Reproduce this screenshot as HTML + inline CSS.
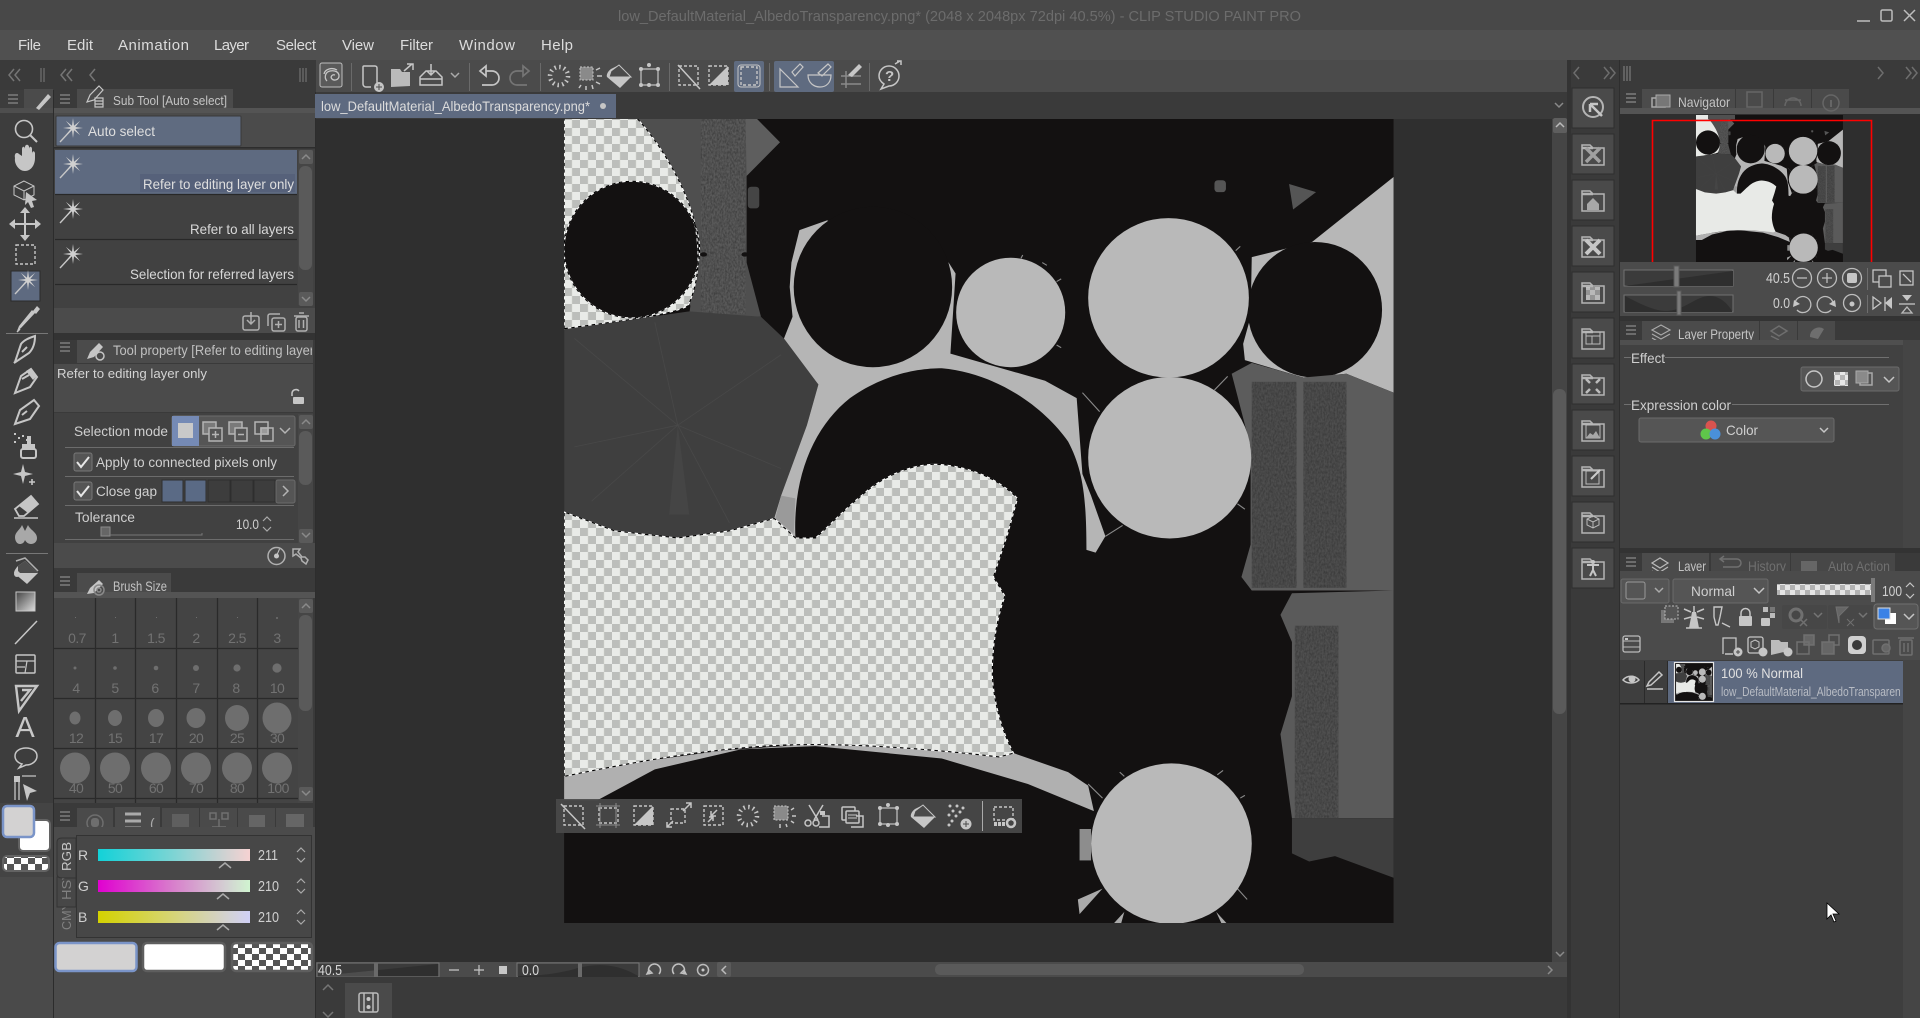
<!DOCTYPE html>
<html lang="en"><head><meta charset="utf-8"><title>CLIP STUDIO PAINT PRO</title>
<style>
html,body{margin:0;padding:0;background:#3a3a3a;overflow:hidden}
svg{display:block}
text{font-family:"Liberation Sans",sans-serif;font-size:13px;fill:#cfcfcf}
.s:not([fill]),.m:not([fill]),.dk:not([fill]){fill:none}
.s:not([stroke]){stroke:#c6c6c6}
.m:not([stroke]){stroke:#8a8a8a}
.dk:not([stroke]){stroke:#757575}
.s:not([stroke-width]),.m:not([stroke-width]),.dk:not([stroke-width]){stroke-width:1.5}
.f:not([fill]){fill:#c6c6c6}
.g{fill:#8e8e8e}
.ds{fill:none;stroke:#c6c6c6;stroke-width:1.4;stroke-dasharray:3 2}
.gl{fill:#727272;font-size:14px;text-anchor:middle;letter-spacing:-.6px}
</style></head><body>
<svg xmlns="http://www.w3.org/2000/svg" width="1920" height="1018" viewBox="0 0 1920 1018">
<defs>
<pattern id="chk" patternUnits="userSpaceOnUse" x="564" y="120" width="16" height="16" patternTransform="scale(1.7422,1.845) translate(-540,-100)">
<rect width="16" height="16" fill="#e9ebe8"/><rect x="8" width="8" height="8" fill="#bcbebb"/><rect y="8" width="8" height="8" fill="#bcbebb"/>
</pattern>
<pattern id="chk2" patternUnits="userSpaceOnUse" width="14" height="12"><rect width="14" height="12" fill="#fff"/><rect x="7" width="7" height="6" fill="#555"/><rect y="6" width="7" height="6" fill="#555"/></pattern>
<pattern id="chk3" patternUnits="userSpaceOnUse" width="10" height="10"><rect width="10" height="10" fill="#e6e6e6"/><rect x="5" width="5" height="5" fill="#b4b4b4"/><rect y="5" width="5" height="5" fill="#b4b4b4"/></pattern>
<filter id="n" x="0" y="0" width="100%" height="100%" color-interpolation-filters="sRGB"><feTurbulence type="fractalNoise" baseFrequency=".35 .2" numOctaves="2" seed="4"/><feColorMatrix values="0 0 0 0 .2  0 0 0 0 .2  0 0 0 0 .2  0 0 0 1.4 -.45"/><feComposite in2="SourceGraphic" operator="in" result="q"/><feMerge><feMergeNode in="SourceGraphic"/><feMergeNode in="q"/></feMerge></filter>
<linearGradient id="gr" x1="0" x2="1"><stop offset="0" stop-color="#12d2d8"/><stop offset=".5" stop-color="#7ed4d4"/><stop offset=".85" stop-color="#d3d2d2"/><stop offset="1" stop-color="#f6d2d2"/></linearGradient>
<linearGradient id="gg" x1="0" x2="1"><stop offset="0" stop-color="#e000d0"/><stop offset=".5" stop-color="#d880cc"/><stop offset=".85" stop-color="#d3d2d2"/><stop offset="1" stop-color="#d0f4d0"/></linearGradient>
<linearGradient id="gb" x1="0" x2="1"><stop offset="0" stop-color="#d4d200"/><stop offset=".5" stop-color="#d6d478"/><stop offset=".85" stop-color="#d3d2d2"/><stop offset="1" stop-color="#d0d0f6"/></linearGradient>
<linearGradient id="gt" x1="0" x2="1" y1="0" y2="1"><stop offset="0" stop-color="#444"/><stop offset="1" stop-color="#ddd"/></linearGradient>
<clipPath id="cv"><rect x="564" y="119" width="830" height="804"/></clipPath>
<clipPath id="ct"><rect x="113" y="340" width="199" height="22"/></clipPath>
<clipPath id="cl"><rect x="1720" y="680" width="180" height="20"/></clipPath>
<clipPath id="cn"><rect x="1620" y="115" width="300" height="147"/></clipPath>
<g id="hb" stroke="#8a8a8a" stroke-width="1.3"><path d="M0,0h10M0,4h10M0,8h10"/></g>
<g id="wand"><path d="M-13,14L-1,1" stroke="#c6c6c6" stroke-width="1.4"/><polygon fill="#d0d0d0" points="10,0 2.3,1 7.1,7.1 1,2.3 0,10 -1,2.3 -7.1,7.1 -2.3,1 -10,0 -2.3,-1 -7.1,-7.1 -1,-2.3 0,-10 1,-2.3 7.1,-7.1 2.3,-1"/></g>
<g id="burst"><circle r="9" fill="none" stroke="#c6c6c6" stroke-width="4.5" stroke-dasharray="1.5 3.2"/></g>
<g id="fold" fill="none" stroke="#b4b4b4" stroke-width="1.5"><path d="M-11,11V-9H-3l3,3H11V11Z"/><path d="M-11,-6H0" stroke-width="2.5"/></g>
<g id="art">
<rect x="42" y="35" width="1445" height="1486" fill="#131111"/>
<path d="M170,35H378L418,78L360,140V300L385,400L260,395L262,380Z" fill="#4f4f4f"/>
<rect x="280" y="35" width="78" height="360" fill="#5a5a5a" filter="url(#n)"/>
<path d="M358,35h20l40,43l-58,62z" fill="#5e5e5e"/>
<path d="M42,422L180,402L260,390L385,400L425,440L485,525L465,600L420,730L408,772L330,795L240,808L130,795L42,760Z" fill="#3f3f3f"/>
<path d="M240,600L225,765H260Z" fill="#454545"/>
<path d="M240,600L60,440M240,600L200,410M240,600L420,470M240,600L90,740M240,600L420,680M240,600L60,640M240,600L330,780" stroke="#484848" stroke-width="1.5"/>
<path d="M500,222L452,240L438,300L435,345L440,400L425,440L485,525L465,600L420,730L408,772L445,808C440,690 480,600 540,550C600,505 660,495 700,495C800,505 880,570 920,630C945,680 952,730 952,830L968,835L985,805L960,730L945,690L935,550L880,518L715,468L724,320L712,300Z" fill="#b5b5b5"/>
<path d="M410,772L420,730L445,735L442,800Z" fill="#9a9a9a"/>
<ellipse cx="580" cy="345" rx="138" ry="148" fill="#131111"/>
<path d="M1240,290L1345,262L1487,142V540L1405,505L1330,512L1228,480L1225,450L1238,400Z" fill="#b7b7b7"/>
<ellipse cx="1350" cy="387" rx="117" ry="125" fill="#131111"/>
<path d="M1205,505L1240,485L1330,512L1405,505L1487,540V905H1240L1222,880L1238,820V640Z" fill="#5c5c5c"/>
<rect x="1240" y="520" width="78" height="380" fill="#4e4e4e" filter="url(#n)"/>
<rect x="1330" y="520" width="75" height="380" fill="#4e4e4e" filter="url(#n)"/>
<path d="M1310,910L1487,905V1325H1310L1290,1170L1310,1100V1000L1290,950Z" fill="#5a5a5a"/>
<rect x="1315" y="970" width="76" height="355" fill="#505050" filter="url(#n)"/>
<path d="M1310,1325H1487V1435L1385,1395L1340,1405L1310,1390Z" fill="#3e3e3e"/>
<path d="M1180,1245l10-8M1220,1288l8-5M1215,1455l17,20M955,1262l25,26M1175,535l23-25M945,540l30,35M985,805l30-20M1215,745l13,10M875,300l8,5M900,335l8-5M900,452l8,5M838,292l3-6M1212,278l8-8M1010,1240l8,8" stroke="#8a8a8a" stroke-width="2"/>
<ellipse cx="285" cy="285" rx="6" ry="4" fill="#131111"/><ellipse cx="357" cy="285" rx="6" ry="4" fill="#131111"/>
<ellipse cx="820" cy="392" rx="95" ry="101" fill="#b9b9b9"/>
<ellipse cx="1095" cy="365" rx="140" ry="147" fill="#b9b9b9"/>
<ellipse cx="1097" cy="660" rx="142" ry="149" fill="#b9b9b9"/>
<ellipse cx="1100" cy="1372" rx="140" ry="148" fill="#b9b9b9"/>
<path d="M42,1248L180,1220L320,1200L480,1188L640,1195L825,1205L920,1240L955,1265L965,1312L850,1262L700,1215L480,1192L350,1198L200,1235L100,1292H42Z" fill="#b0b0b0"/>
<path d="M937,1475L980,1455L940,1502Z" fill="#aaa"/><path d="M998,1521L1018,1498L1012,1521Z" fill="#aaa"/><path d="M1178,1498L1198,1521H1188Z" fill="#aaa"/><rect x="940" y="1345" width="20" height="58" fill="#8d8d8d"/>
<rect x="1175" y="148" width="20" height="22" rx="6" fill="#555"/><path d="M1305,155L1352,170L1312,202Z" fill="#555"/><rect x="362" y="160" width="20" height="40" rx="6" fill="#454545"/>
<path d="M42,35H170C205,75 250,150 268,220C282,290 275,340 258,380C230,395 180,402 42,422Z"/>
<ellipse cx="160" cy="276" rx="118" ry="126" fill="#131111"/>
<path d="M42,760L130,795L240,808L330,795L408,772L445,808H480C505,785 530,755 560,730C590,700 640,672 690,672C750,675 800,700 832,735L815,800L790,880L810,915C795,960 788,1010 788,1060C790,1110 805,1165 825,1205L800,1212C700,1200 560,1186 430,1190C300,1195 160,1222 42,1248Z"/>
</g>
</defs>

<rect width="1920" height="1018" fill="#3a3a3a"/>
<!-- title -->
<rect width="1920" height="30" fill="#484848"/>
<text x="618" y="21" textLength="683" lengthAdjust="spacingAndGlyphs" style="fill:#6c6c6c;font-size:15px">low_DefaultMaterial_AlbedoTransparency.png* (2048 x 2048px 72dpi 40.5%) - CLIP STUDIO PAINT PRO</text>
<path d="M1857,21h13" stroke="#bdbdbd" stroke-width="1.5"/><rect x="1881" y="10" width="11" height="11" rx="1.5" fill="none" stroke="#bdbdbd" stroke-width="1.5"/><path d="M1904,10l11,11M1915,10l-11,11" stroke="#bdbdbd" stroke-width="1.5"/>
<!-- menu -->
<rect y="30" width="1920" height="30" fill="#505050"/>
<g><text x="18" y="50" style="font-size:15px;fill:#dcdcdc" textLength="23">File</text><text x="67" y="50" style="font-size:15px;fill:#dcdcdc" textLength="26">Edit</text><text x="118" y="50" style="font-size:15px;fill:#dcdcdc" textLength="71">Animation</text><text x="214" y="50" style="font-size:15px;fill:#dcdcdc" textLength="35">Layer</text><text x="276" y="50" style="font-size:15px;fill:#dcdcdc" textLength="40">Select</text><text x="342" y="50" style="font-size:15px;fill:#dcdcdc" textLength="32">View</text><text x="400" y="50" style="font-size:15px;fill:#dcdcdc" textLength="33">Filter</text><text x="459" y="50" style="font-size:15px;fill:#dcdcdc" textLength="56">Window</text><text x="541" y="50" style="font-size:15px;fill:#dcdcdc" textLength="32">Help</text></g>

<!-- left top row -->
<g class="dk"><path d="M14,69l-5,6 5,6M20,69l-5,6 5,6M66,69l-5,6 5,6M72,69l-5,6 5,6M95,69l-5,6 5,6"/><path d="M41,68v14M44,68v14M300,68v14M303,68v14M306,68v14" stroke="#666"/></g>
<!-- tool strip -->
<rect y="90" width="53" height="928" fill="#3d3d3d"/><rect x="53" y="90" width="1" height="928" fill="#2c2c2c"/>
<rect y="108" width="53" height="5" fill="#4e4e4e"/><rect x="24" y="89" width="29" height="19" fill="#4b4b4b"/>
<use href="#hb" x="8" y="115" transform="translate(0,-20)"/>
<path d="M36,108L48,94l3,3L39,110Z" class="f"/>
<g>
<circle cx="24" cy="129" r="8.5" class="s" stroke-width="1.6"/><path d="M30,135l7,7" class="s" stroke-width="2"/>
<path d="M15,158c-1,6 4,13 10,13s10-6 10-13v-5c-1-3-3-2-3,1v-5c0-3-3-3-3,0v-2c0-3-4-3-4,0v2c0-3-3-3-3,0v7l-3-2c-2-2-5-1-4,4z" class="f"/>
<path d="M24,181l-10,5v9l10,5 10-5v-9zM14,186l10,5 10-5M24,191v9" class="s" stroke-width="1"/><path d="M26,192l11,8-5,1 2,6-3,1-3-6-3,3z" class="f"/>
<path d="M25,208v32M10,224h30" class="s" stroke-width="2"/><path d="M25,207l-5,6h10zM25,241l-5-6h10zM9,224l6-5v10zM41,224l-6-5v10z" class="f"/>
<rect x="16" y="245" width="19" height="19" class="ds"/>
<rect x="11" y="271" width="29" height="30" fill="#5e6a80" stroke="#2a2a2a"/><use href="#wand" x="28" y="280"/>
<path d="M37,306l3,3-4,5-3-3zM32,310l3,3-14,15-4,3 2-5z" class="f"/><path d="M20,329l-3,3" class="s"/>
<path d="M15,362l6-18c3-4 8-6 14-8 0,6-1,12-6,17l-15,10zM22,352l5-5" class="s" stroke-width="2"/>
<path d="M15,393l6-17 10-7 6,8-7,10zM22,379l7-4" class="s" stroke-width="2"/><path d="M26,371l5-3 6,8-4,4z" class="f"/>
<path d="M15,424l5-14 14-10 5,6-9,13zM22,415l5-4" class="s" stroke-width="2"/>
<g class="f"><rect x="14" y="433" width="2" height="2"/><rect x="18" y="437" width="2" height="2"/><rect x="14" y="441" width="2" height="2"/><rect x="22" y="435" width="2" height="2"/><rect x="26" y="439" width="2" height="2"/></g><rect x="21" y="449" width="15" height="9" rx="2" class="s" stroke-width="2"/><rect x="22" y="444" width="13" height="6" class="f"/><rect x="27" y="436" width="4" height="8" class="f"/>
<path d="M23,464l2,8 8,2-8,2-2,8-2-8-8-2 8-2z" class="f"/><path d="M32,479v6M29,482h6" class="s" stroke-width="1.6"/>
<path d="M15,509l16-13 7,8-14,12h-5zM21,504l8,8" class="s" stroke-width="1.8"/><path d="M19,506l12-10 7,8-10,9z" class="f"/><path d="M14,518h24" class="s"/>
<path d="M15,537c0-5 5-7 7-12l3,6 3-6c2,5 9,7 9,13 0,4-3,6-6,6-3,0-5-2-6-4-1,3-3,4-5,4-3,0-5-3-5-7z" fill="#a8a8a8"/>
<rect x="6" y="333" width="42" height="1" fill="#777"/><rect x="6" y="553" width="42" height="1" fill="#777"/>
<path d="M25,561l13,12-11,11-13-11c0-2 2-5 4-7z" class="f"/><path d="M18,566l7-5 13,12H18z" fill="#4d4d4d"/><circle cx="17" cy="574" r="3" class="f"/><path d="M16,561l9-3 13,13" class="s" stroke="#b0b0b0"/>
<rect x="16" y="592" width="19" height="19" fill="url(#gt)" stroke="#c6c6c6"/>
<path d="M15,644l22-23" class="s"/>
<rect x="16" y="655" width="19" height="18" rx="1" class="s"/><path d="M16,661h19M27,661l-2,12M17,667h8" class="s" stroke-width="1.2"/>
<path d="M16,686H37L19,711ZM22,690l8,0-9,11" class="s" stroke-width="2.4"/>
<text x="25" y="737" text-anchor="middle" style="font-size:29px;fill:#c8c8c8">A</text>
<path d="M26,748c6,0 11,3 11,8s-5,9-11,9l-7,3 3-4c-4-1-7-4-7-8 0-5 5-8 11-8z" class="s"/>
<path d="M15,800V778h4v22M22,776H36" class="s" stroke-width="1.3"/><rect x="14" y="776" width="6" height="6" class="f"/><path d="M23,784l14,7-7,2-3,8z" class="f"/>
</g>
<!-- colour swatches in strip -->
<rect y="877" width="53" height="141" fill="#4a4a4a"/>
<rect y="803" width="53" height="74" fill="#444"/>
<rect x="19" y="820" width="31" height="31" rx="4" fill="#fff" stroke="#636363" stroke-width="2"/>
<rect x="3" y="806" width="31" height="31" rx="4" fill="#d3d2d2" stroke="#7a94c8" stroke-width="2.5"/>
<rect x="3" y="856" width="46" height="15" rx="4" fill="url(#chk2)" stroke="#636363" stroke-width="2"/>

<!-- sub tool panel -->
<rect x="54" y="89" width="262" height="19" fill="#3a3a3a"/>
<use href="#hb" x="60" y="95"/>
<rect x="77" y="89" width="156" height="20" fill="#4b4b4b"/>
<rect x="54" y="108" width="261" height="5" fill="#545454"/>
<path d="M87,102l3-7 9-9 4,4-9,10zM95,107h8v-9h-8zM95,101h8M95,104h8" class="s" stroke-width="1.2"/>
<text x="113" y="105" textLength="114" lengthAdjust="spacingAndGlyphs" style="fill:#c4c4c4">Sub Tool [Auto select]</text>
<rect x="54" y="113" width="261" height="35" fill="#4b4b4b"/><rect x="54" y="147" width="261" height="1.5" fill="#2d2d2d"/>
<rect x="56" y="116" width="185" height="30" rx="1" fill="#5f6b80" stroke="#3a3a3a"/>
<use href="#wand" x="73" y="128"/>
<text x="88" y="136" textLength="67" lengthAdjust="spacingAndGlyphs" style="font-size:14px;fill:#dedede">Auto select</text>
<rect x="54" y="148.500" width="261" height="160" fill="#414141"/>
<rect x="55" y="150" width="242" height="44" fill="#5e6a80"/>
<rect x="140" y="174" width="155" height="18" fill="#56617a"/>
<path d="M55,194.500h242M55,239.500h242M55,284.500h242" stroke="#282828" stroke-width="1.2"/>
<use href="#wand" x="73" y="164"/><use href="#wand" x="73" y="209" /><use href="#wand" x="73" y="254"/>
<text x="143" y="189" textLength="151" lengthAdjust="spacingAndGlyphs" style="font-size:14px;fill:#dfdfdf">Refer to editing layer only</text>
<text x="190" y="234" textLength="104" lengthAdjust="spacingAndGlyphs" style="font-size:14px;fill:#d8d8d8">Refer to all layers</text>
<text x="130" y="279" textLength="164" lengthAdjust="spacingAndGlyphs" style="font-size:14px;fill:#d8d8d8">Selection for referred layers</text>
<rect x="298" y="150" width="15" height="155" fill="#464646"/>
<rect x="299" y="150" width="14" height="14" rx="2" fill="#5a5a5a"/><path d="M302,159l4-4 4,4" class="m"/>
<rect x="299" y="166" width="13" height="104" rx="6" fill="#5a5a5a"/>
<rect x="299" y="292" width="14" height="14" rx="2" fill="#5a5a5a"/><path d="M302,297l4,4 4-4" class="m"/>
<rect x="54" y="308" width="261" height="25" fill="#4b4b4b"/>
<g class="m" stroke="#b0b0b0"><rect x="243" y="316" width="16" height="14" rx="2"/><path d="M251,312v11M247,320l4,4 4-4"/><rect x="272" y="318" width="13" height="13" rx="2"/><path d="M268,326v-10a2,2 0 0 1 2-2h10M278.500,321v7M275,324.500h7"/><rect x="296" y="317" width="11" height="14" rx="2"/><path d="M294,316h15M299,313h5M299,320v8M303.500,320v8"/></g>

<!-- tool property -->
<rect x="54" y="333" width="261" height="7" fill="#333"/>
<use href="#hb" x="60" y="343"/>
<rect x="77" y="340" width="236" height="23" fill="#4b4b4b"/>
<path d="M87,359l3-7 9-9 4,4-9,10z" class="f"/><circle cx="100" cy="356" r="4" class="s"/>
<text x="113" y="355" clip-path="url(#ct)" textLength="232" lengthAdjust="spacingAndGlyphs" style="fill:#c0c0c0;font-size:14px">Tool property [Refer to editing layer only]</text>
<rect x="54" y="364" width="259" height="48" fill="#4b4b4b"/>
<text x="57" y="378" textLength="150" lengthAdjust="spacingAndGlyphs" style="fill:#d4d4d4">Refer to editing layer only</text>
<path d="M292,396v-3a4,4 0 0 1 7-2" class="s"/><rect x="293" y="397" width="11" height="7" rx="1" class="f"/>
<rect x="54" y="413" width="259" height="130" fill="#414141"/>
<text x="74" y="436" textLength="94" lengthAdjust="spacingAndGlyphs" style="fill:#cfcfcf;font-size:13.5px">Selection mode</text>
<rect x="172" y="416" width="123" height="30" rx="2" fill="#555" stroke="#6a6a6a"/>
<rect x="172" y="416" width="27" height="30" fill="#758ab5"/><rect x="178" y="423" width="15" height="15" fill="#c9c9c9"/>
<g class="s" stroke="#b4b4b4"><rect x="203" y="422" width="13" height="12" fill="#7a7a7a"/><rect x="209" y="428" width="13" height="13" fill="#555"/><path d="M215.500,431v7M212,434.500h7"/><rect x="229" y="422" width="13" height="12" fill="#7a7a7a"/><rect x="235" y="428" width="12" height="13" fill="#555"/><path d="M238,434.500h6"/><rect x="255" y="422" width="13" height="12" /><rect x="261" y="428" width="12" height="13"/><rect x="261" y="428" width="7" height="6" fill="#9a9a9a"/><path d="M280,428l5,5 5-5"/></g>
<path d="M65,447.500h229M65,476.500h229M65,505.500h229M65,539.500h229" stroke="#6c6c6c"/>
<rect x="74" y="453" width="18" height="18" rx="2" fill="#555" stroke="#777"/><path d="M77,462l4,5 8-10" stroke="#e6e6e6" stroke-width="2" fill="none"/>
<text x="96" y="467" textLength="181" lengthAdjust="spacingAndGlyphs" style="fill:#d0d0d0;font-size:13.5px">Apply to connected pixels only</text>
<rect x="74" y="482" width="18" height="18" rx="2" fill="#555" stroke="#777"/><path d="M77,491l4,5 8-10" stroke="#e6e6e6" stroke-width="2" fill="none"/>
<text x="96" y="496" textLength="61" lengthAdjust="spacingAndGlyphs" style="fill:#d0d0d0;font-size:13.5px">Close gap</text>
<rect x="162" y="480" width="21" height="22" fill="#5a6a85" stroke="#2e2e2e"/><rect x="185" y="480" width="21" height="22" fill="#5a6a85" stroke="#2e2e2e"/><rect x="208" y="480" width="22" height="22" fill="#3d3d3d" stroke="#2e2e2e"/><rect x="231" y="480" width="22" height="22" fill="#3d3d3d" stroke="#2e2e2e"/><rect x="254" y="480" width="21" height="22" fill="#3d3d3d" stroke="#2e2e2e"/>
<rect x="276" y="480" width="19" height="23" rx="2" fill="#555" stroke="#6a6a6a"/><path d="M283,486l5,5-5,5" class="m" stroke="#b4b4b4"/>
<text x="75" y="522" textLength="60" lengthAdjust="spacingAndGlyphs" style="fill:#cfcfcf;font-size:13.5px">Tolerance</text>
<text x="236" y="529" textLength="23" lengthAdjust="spacingAndGlyphs" style="fill:#cfcfcf;font-size:14px">10.0</text>
<path d="M263,521l4-4 4,4M263,527l4,4 4-4" class="m" stroke="#aaa" stroke-width="1.2"/>
<rect x="101" y="527" width="9" height="9" fill="#666" stroke="#8a8a8a"/><path d="M110,535h92v-2" stroke="#777" fill="none"/>
<rect x="298" y="414" width="15" height="129" fill="#464646"/>
<rect x="299" y="415" width="14" height="14" rx="2" fill="#5a5a5a"/><path d="M302,424l4-4 4,4" class="m"/>
<rect x="299" y="431" width="13" height="54" rx="6" fill="#5a5a5a"/>
<rect x="299" y="529" width="14" height="14" rx="2" fill="#5a5a5a"/><path d="M302,533l4,4 4-4" class="m"/>
<rect x="54" y="543" width="261" height="25" fill="#4b4b4b"/>
<circle cx="276.500" cy="556" r="8.500" class="m" stroke="#b0b0b0"/><circle cx="276.500" cy="556" r="2.500" class="f"/><path d="M276.500,556l3-7" class="s" stroke-width="1"/>
<path d="M293,549l7,0-2,3 4,5 3,0 3,3-2,4-4-3-1-3-5-4-3,2z" class="m" stroke="#b0b0b0"/>

<!-- brush size -->
<rect x="54" y="568" width="261" height="30" fill="#3a3a3a"/>
<use href="#hb" x="60" y="577"/>
<rect x="77" y="573" width="94" height="20" fill="#4b4b4b"/>
<rect x="54" y="592" width="261" height="6" fill="#545454"/>
<path d="M87,594l3-6 9-8 4,4-9,9z" class="f"/><circle cx="99" cy="590" r="5" class="m"/><circle cx="99" cy="590" r="2" class="m"/>
<text x="113" y="591" textLength="54" lengthAdjust="spacingAndGlyphs" style="fill:#c4c4c4;font-size:14px">Brush Size</text>
<rect x="54" y="598" width="244" height="205" fill="#444"/>
<path d="M95.500,598v205M135.500,598v205M176.500,598v205M217.500,598v205M257.500,598v205M54,648.500h244M54,698.500h244M54,748.500h244M54,798.500h244" stroke="#2a2a2a" stroke-width="1.3"/>
<g fill="#6e6e6e">
<rect x="75" y="617" width="1" height="1"/><rect x="115" y="617" width="1" height="1"/><rect x="156" y="617" width="1" height="1"/><rect x="196" y="617" width="1" height="1"/><rect x="237" y="617" width="1" height="1"/><circle cx="277" cy="618" r="1"/>
<circle cx="75" cy="668" r="1.5"/><circle cx="115" cy="668" r="1.8"/><circle cx="156" cy="668" r="2.3"/><circle cx="196" cy="668" r="3"/><circle cx="237" cy="668" r="3.6"/><circle cx="277" cy="668" r="4.6"/>
<ellipse cx="75" cy="718" rx="5.500" ry="6.500"/><ellipse cx="115" cy="718" rx="7" ry="8"/><ellipse cx="156" cy="718" rx="8" ry="9"/><ellipse cx="196" cy="718" rx="9.500" ry="10"/><ellipse cx="237" cy="718" rx="12" ry="13"/><ellipse cx="277" cy="718" rx="14.500" ry="15.500"/>
<ellipse cx="75" cy="768" rx="15" ry="15.500"/><ellipse cx="115" cy="768" rx="15" ry="15.500"/><ellipse cx="156" cy="768" rx="15" ry="15.500"/><ellipse cx="196" cy="768" rx="15" ry="15.500"/><ellipse cx="237" cy="768" rx="15" ry="15.500"/><ellipse cx="277" cy="768" rx="15" ry="15.500"/>
</g>
<text class="gl" x="77" y="643">0.7</text><text class="gl" x="115" y="643">1</text><text class="gl" x="156" y="643">1.5</text><text class="gl" x="196" y="643">2</text><text class="gl" x="237" y="643">2.5</text><text class="gl" x="277" y="643">3</text>
<text class="gl" x="76" y="693">4</text><text class="gl" x="115" y="693">5</text><text class="gl" x="155" y="693">6</text><text class="gl" x="196" y="693">7</text><text class="gl" x="236" y="693">8</text><text class="gl" x="277" y="693">10</text>
<text class="gl" x="76" y="743">12</text><text class="gl" x="115" y="743">15</text><text class="gl" x="156" y="743">17</text><text class="gl" x="196" y="743">20</text><text class="gl" x="237" y="743">25</text><text class="gl" x="277" y="743">30</text>
<text class="gl" x="76" y="793">40</text><text class="gl" x="115" y="793">50</text><text class="gl" x="156" y="793">60</text><text class="gl" x="196" y="793">70</text><text class="gl" x="237" y="793">80</text><text class="gl" x="278" y="793">100</text>
<rect x="298" y="598" width="15" height="205" fill="#464646"/>
<rect x="299" y="599" width="14" height="14" rx="2" fill="#5a5a5a"/><path d="M302,608l4-4 4,4" class="m"/>
<rect x="299" y="615" width="13" height="96" rx="6" fill="#5a5a5a"/>
<rect x="299" y="787" width="14" height="14" rx="2" fill="#5a5a5a"/><path d="M302,791l4,4 4-4" class="m"/>

<!-- colour panel -->
<rect x="54" y="803" width="261" height="24" fill="#3a3a3a"/>
<use href="#hb" x="60" y="812"/>
<g fill="#4a4a4a"><rect x="77" y="808" width="36" height="19"/><rect x="115" y="807" width="45" height="22" fill="#4b4b4b"/><rect x="162" y="808" width="37" height="19"/><rect x="200" y="808" width="37" height="19"/><rect x="238" y="808" width="37" height="19"/><rect x="276" y="808" width="37" height="19"/></g>
<circle cx="95" cy="823" r="8" fill="none" stroke="#6e6e6e" stroke-width="1.5"/><rect x="91" y="818" width="8" height="9" rx="3" fill="#6e6e6e"/>
<path d="M125,814h16M125,821h16M125,828h16" stroke="#aaa" stroke-width="3"/><text x="150" y="828" style="fill:#aaa;font-size:14px">(</text>
<rect x="172" y="814" width="17" height="13" fill="#5f5f5f"/><path d="M210,813h6v6h-6zM222,813h6v6h-6zM219,819v8M212,827h14" stroke="#707070" fill="none" stroke-width="1.5"/><rect x="249" y="815" width="16" height="12" fill="#656565"/><rect x="286" y="814" width="18" height="13" fill="#666"/>
<rect x="54" y="827" width="261" height="191" fill="#4b4b4b"/>
<rect x="76.500" y="835.500" width="235" height="102" fill="#474747" stroke="#333"/>
<text transform="translate(71,930) rotate(-90)" textLength="28" lengthAdjust="spacingAndGlyphs" style="font-size:13px;fill:#808080">CMY</text>
<rect x="57" y="877" width="19" height="30" fill="#474747" stroke="#333"/>
<text transform="translate(71,900) rotate(-90)" textLength="30" lengthAdjust="spacingAndGlyphs" style="font-size:13px;fill:#808080">HSV</text>
<path d="M76,838H62q-5,0-5,4v32q0,4,5,4H76Z" fill="#474747" stroke="#333"/>
<text transform="translate(71,871) rotate(-90)" textLength="29" lengthAdjust="spacingAndGlyphs" style="font-size:13px;fill:#c6c6c6">RGB</text>
<text x="78" y="860" textLength="11" style="font-size:14px;fill:#cfcfcf">R</text><text x="78" y="891" textLength="11" style="font-size:14px;fill:#cfcfcf">G</text><text x="78" y="922" textLength="10" style="font-size:14px;fill:#cfcfcf">B</text>
<rect x="98" y="849" width="152" height="12" fill="url(#gr)"/><rect x="98" y="880" width="152" height="12" fill="url(#gg)"/><rect x="98" y="911" width="152" height="12" fill="url(#gb)"/>
<text x="258" y="860" textLength="20" lengthAdjust="spacingAndGlyphs" style="font-size:15px">211</text><text x="258" y="891" textLength="21" lengthAdjust="spacingAndGlyphs" style="font-size:15px">210</text><text x="258" y="922" textLength="21" lengthAdjust="spacingAndGlyphs" style="font-size:15px">210</text>
<g class="m" stroke="#aaa"><path d="M219,868l6-5 6,5M217,899l6-5 6,5M217,930l6-5 6,5"/><path d="M297,852l4-4 4,4M297,858l4,4 4-4M297,883l4-4 4,4M297,889l4,4 4-4M297,914l4-4 4,4M297,920l4,4 4-4" stroke-width="1.2"/></g>
<rect x="55.500" y="943" width="81" height="28" rx="4" fill="#d3d2d2" stroke="#7a94c8" stroke-width="2.500"/>
<rect x="143" y="943" width="82" height="28" rx="4" fill="#fff" stroke="#5e5e5e" stroke-width="2.500"/>
<rect x="232" y="943" width="80" height="28" rx="4" fill="url(#chk2)" stroke="#5e5e5e" stroke-width="2.500"/>
<rect x="315" y="92" width="1" height="926" fill="#2d2d2d"/>

<!-- main toolbar -->
<rect x="316" y="60" width="1251" height="32" fill="#4b4b4b"/>
<rect x="320" y="63" width="22" height="24" rx="2" fill="#5a5a5a" stroke="#bdbdbd"/><path d="M327,81c-3-3-2-9 3-10 5-1 9,1 9,5 0,4-5,5-7,3-2-2 0-5 3-4M324,74c1-5 8-7 13-4" class="s" stroke-width="1.3"/>
<path d="M351.500,63v28M469.500,63v28M540.500,63v28M669.500,63v28M769.500,63v28M869.500,63v28" stroke="#6a6a6a"/>
<path d="M364,66h11a2,2 0 0 1 2,2V84M364,66a1,1 0 0 0-1,1V84a3,3 0 0 0 3,3H371" class="s"/><circle cx="379" cy="87" r="5" class="f"/><path d="M379,84v6M376,87h6" stroke="#4b4b4b"/>
<path d="M391,87V69h9l2,3h8v14z" class="f" fill-opacity=".9"/><path d="M404,71l8-7M407,64h6v6" class="s"/>
<path d="M420,85v-8l6-6h10l6,6v8zM420,79h22" class="s"/><path d="M431,64v11M427,71l4,4 4-4" class="s"/><path d="M451,73l4,4 4-4" class="m" stroke="#aaa"/>
<path d="M480,71l6-5v10zM486,71h6a7,7 0 0 1 0,14h-10" class="s" stroke-width="1.7"/>
<path d="M529,71l-6-5v10zM523,71h-6a7,7 0 0 0 0,14h10" class="dk" stroke-width="1.7"/>
<use href="#burst" x="559" y="76"/>
<rect x="580" y="67" width="13" height="13" fill="#8a8a8a" stroke="#c6c6c6" stroke-dasharray="2 1.500"/><path d="M596,70l4-2M597,76h5M596,82l4,2M592,85l1,4M586,86v4M581,85l-2,3" class="s" stroke-width="1.5"/>
<path d="M619,65l12,12-11,11-13-11c-1-2 1-6 4-8z" class="f"/><path d="M611,71l8-6 12,12H609z" fill="#4b4b4b" stroke="#c6c6c6"/>
<rect x="641" y="69" width="17" height="16" class="s" stroke-width="1.200"/><g class="f"><circle cx="649" cy="65" r="2"/><circle cx="641" cy="69" r="2"/><circle cx="658" cy="69" r="2"/><circle cx="641" cy="85" r="2"/><circle cx="658" cy="85" r="2"/><circle cx="649" cy="85" r="2"/></g>
<rect x="679" y="66" width="19" height="19" class="ds"/><path d="M678,65l22,24" class="s"/>
<rect x="709" y="66" width="19" height="19" class="ds"/><path d="M728,66V85H709Z" class="f"/>
<rect x="734" y="61" width="30" height="31" rx="2" fill="#5f6b80"/><rect x="741" y="67" width="16" height="18" class="ds"/><rect x="738" y="65" width="22" height="22" rx="3" class="s" stroke-width="1"/>
<rect x="774" y="61" width="60" height="31" rx="2" fill="#5f6b80"/>
<path d="M780,69v18h18zM792,72l8-8 3,3-8,9z" class="s" stroke-width="1.200"/>
<path d="M808,75h23c0,8-5,12-11,12s-12-4-12-12zM818,73l10-9 3,3-9,9z" class="s" stroke-width="1.200"/>
<path d="M841,76h20M841,84h20M846,71v17" class="m"/><path d="M848,75l11-11 3,3-10,10z" class="f"/>
<path d="M889,66a10,10 0 0 1 0,20l-8,3 3-5c-3-2-5-5-5-8a10,10 0 0 1 10-10zM895,64l5-3M897,61h4v4" class="s"/><text x="885" y="81" style="font-size:15px;font-weight:bold;fill:#c6c6c6">?</text>
<!-- tab bar -->
<rect x="316" y="92" width="1251" height="27" fill="#3a3a3a"/>
<rect x="315" y="94" width="301" height="24" fill="#5e6a80"/>
<text x="321" y="111" textLength="269" lengthAdjust="spacingAndGlyphs" style="font-size:14px;fill:#dcdcdc">low_DefaultMaterial_AlbedoTransparency.png*</text>
<circle cx="603" cy="106" r="3" fill="#c6c6c6"/>
<path d="M1555,103l4,4 4-4" class="m"/>
<!-- canvas -->
<rect x="316" y="119" width="1236" height="843" fill="#2f2f2f"/>
<g clip-path="url(#cv)"><g transform="translate(540,100) scale(.574,.542)" fill="url(#chk)"><use href="#art"/>
<g fill="none" stroke="#fff" stroke-width="1.8"><path id="sel" d="M42,422V35M170,35C205,75 250,150 268,220C282,290 275,340 258,380C230,395 180,402 42,422M42,1248V760L130,795L240,808L330,795L408,772L445,808H480C505,785 530,755 560,730C590,700 640,672 690,672C750,675 800,700 832,735L815,800L790,880L810,915C795,960 788,1010 788,1060C790,1110 805,1165 825,1205L800,1212C700,1200 560,1186 430,1190C300,1195 160,1222 42,1248"/><ellipse cx="160" cy="276" rx="118" ry="126"/></g>
<g fill="none" stroke="#000" stroke-width="2" stroke-dasharray="6 6"><path d="M42,422V35M170,35C205,75 250,150 268,220C282,290 275,340 258,380C230,395 180,402 42,422M42,1248V760L130,795L240,808L330,795L408,772L445,808H480C505,785 530,755 560,730C590,700 640,672 690,672C750,675 800,700 832,735L815,800L790,880L810,915C795,960 788,1010 788,1060C790,1110 805,1165 825,1205L800,1212C700,1200 560,1186 430,1190C300,1195 160,1222 42,1248"/><ellipse cx="160" cy="276" rx="118" ry="126"/></g>
</g></g>
<!-- floating toolbar -->
<rect x="556" y="799" width="466" height="34" fill="#4a4a4a" fill-opacity=".92"/>
<rect x="564" y="806" width="19" height="19" class="ds"/><path d="M561,804l24,25" class="s"/>
<rect x="599" y="808" width="19" height="15" class="ds"/><path d="M596,806h24M596,825h24M600,803v25M616,803v25" class="m" stroke-width="1"/>
<rect x="634" y="806" width="19" height="19" class="ds"/><path d="M653,806v19H634Z" class="f"/>
<rect x="671" y="809" width="14" height="14" class="ds"/><path d="M683,811l8-8M686,803h5v5M673,821l-6,6M667,822v5h5" class="s"/>
<rect x="704" y="806" width="19" height="19" class="ds"/><path d="M717,810l-6,6M711,811v5h5M708,822l5-5M713,821v-4h-4" class="s"/>
<use href="#burst" x="748" y="816"/>
<rect x="774" y="806" width="14" height="14" fill="#8a8a8a" stroke="#c6c6c6" stroke-dasharray="2 1.500"/><path d="M791,810l3-2M792,816h4M791,821l3,2M786,824l1,3M780,824v4" class="s"/>
<path d="M809,805l9,15M823,805l-9,15" class="s"/><circle cx="808" cy="823" r="3" class="s"/><circle cx="816" cy="823" r="3" class="s"/><path d="M822,816h7v11h-10" class="s"/><rect x="820" y="811" width="5" height="4" class="f"/>
<rect x="842" y="807" width="13" height="13" rx="1" class="s"/><rect x="846" y="811" width="13" height="12" rx="1" fill="#4a4a4a" stroke="#c6c6c6" stroke-width="1.500"/><path d="M848,815h9M848,818h9" class="s" stroke-width="1"/><path d="M856,816h7v11h-12" class="s"/>
<rect x="880" y="808" width="17" height="16" class="s" stroke-width="1.200"/><g class="f"><circle cx="888" cy="805" r="2"/><circle cx="880" cy="808" r="2"/><circle cx="897" cy="808" r="2"/><circle cx="880" cy="824" r="2"/><circle cx="897" cy="824" r="2"/><circle cx="888" cy="825" r="2"/></g>
<path d="M923,805l12,12-11,11-13-11c-1-2 1-6 4-8z" class="f"/><path d="M915,811l8-6 12,12H913z" fill="#4a4a4a" stroke="#c6c6c6"/>
<g class="f"><circle cx="950" cy="806" r="1.500"/><circle cx="957" cy="806" r="1.500"/><circle cx="963" cy="808" r="1.500"/><circle cx="953" cy="811" r="1.500"/><circle cx="960" cy="812" r="1.500"/><circle cx="949" cy="815" r="1.500"/><circle cx="956" cy="816" r="1.500"/><circle cx="952" cy="821" r="1.500"/><circle cx="949" cy="825" r="1.500"/><circle cx="966" cy="824" r="5.500"/></g><path d="M966,821v6M963,824h6" stroke="#4a4a4a"/>
<path d="M982.500,801v30" stroke="#aaa"/>
<rect x="994" y="807" width="19" height="13" class="ds"/><path d="M994,824h11" stroke="#c6c6c6" stroke-width="4" stroke-dasharray="3 1"/><circle cx="1011" cy="823" r="4" class="s" stroke-width="2.500"/>

<!-- vertical scrollbar -->
<rect x="1552" y="119" width="15" height="844" fill="#454545"/>
<rect x="1553" y="118" width="14" height="15" rx="2" fill="#5e5e5e"/><path d="M1556,127l4-4 4,4" class="m" stroke="#bbb"/>
<rect x="1553" y="389" width="13" height="325" rx="6" fill="#5a5a5a"/>
<path d="M1556,952l4,4 4-4" class="m"/>
<!-- status bar -->
<rect x="316" y="962" width="1251" height="15" fill="#4b4b4b"/>
<rect x="317" y="963" width="122" height="14" fill="#3b3b3b" stroke="#777"/><path d="M318,976l120-12v12z" fill="#2f2f2f"/><path d="M318,976l60-6v6z" fill="#4d4d4d"/>
<text x="318" y="975" textLength="24" lengthAdjust="spacingAndGlyphs" style="font-size:15px;fill:#d8d8d8">40.5</text>
<rect x="374" y="963" width="4" height="14" fill="#6a6a6a"/>
<path d="M449,970h10M474,970h10M479,965v10" class="s" stroke-width="1.200"/><rect x="499" y="966" width="8" height="8" class="f"/>
<rect x="517" y="963" width="122" height="14" fill="#3b3b3b" stroke="#777"/><path d="M518,976c20,0 40-2 60-8 20-5 40-4 60,8v1h-120z" fill="#2f2f2f"/>
<text x="522" y="975" textLength="17" lengthAdjust="spacingAndGlyphs" style="font-size:15px;fill:#d8d8d8">0.0</text>
<rect x="578" y="963" width="4" height="14" fill="#6a6a6a"/>
<path d="M650,974a6,6 0 1 1 9,0M649,970l3,3-5,1z" class="m" stroke="#c0c0c0"/><path d="M674,974a6,6 0 1 1 9,0M684,970l-3,3 5,1z" class="m" stroke="#c0c0c0"/>
<circle cx="703" cy="970" r="5.500" class="m" stroke="#bbb"/><circle cx="703" cy="970" r="1.500" class="f"/>
<rect x="717" y="962" width="14" height="15" rx="2" fill="#5a5a5a"/><path d="M726,966l-4,4 4,4" class="m" stroke="#bbb"/>
<rect x="935" y="964" width="369" height="11" rx="5" fill="#5a5a5a"/>
<path d="M1548,966l4,4-4,4" class="m"/>
<!-- bottom -->
<rect x="316" y="977" width="1251" height="41" fill="#3a3a3a"/>
<rect x="345" y="983" width="47" height="35" fill="#4a4a4a"/>
<rect x="359" y="993" width="19" height="19" rx="2" class="m" stroke="#bbb"/><path d="M364,993v19M373,993v19" class="m" stroke="#bbb"/><circle cx="368.500" cy="999" r="2" class="f"/><circle cx="368.500" cy="1007" r="2" class="f"/>
<path d="M323,990l5-5 5,5M323,1012l5,5 5-5" class="dk"/>

<!-- right column -->
<rect x="1567" y="60" width="4" height="958" fill="#333"/>
<path d="M1579,67l-5,6 5,6M1604,67l5,6-5,6M1610,67l5,6-5,6M1624,66v15M1627,66v15M1630,66v15M1878,67l5,6-5,6M1906,67l5,6-5,6M1912,67l5,6-5,6" class="dk" stroke="#6e6e6e"/>
<g fill="#4a4a4a" stroke="#2e2e2e">
<rect x="1572" y="88" width="42" height="40"/><rect x="1572" y="134" width="42" height="40"/><rect x="1572" y="180" width="42" height="40"/><rect x="1572" y="226" width="42" height="40"/><rect x="1572" y="272" width="42" height="40"/><rect x="1572" y="318" width="42" height="40"/><rect x="1572" y="364" width="42" height="40"/><rect x="1572" y="410" width="42" height="40"/><rect x="1572" y="456" width="42" height="40"/><rect x="1572" y="502" width="42" height="40"/><rect x="1572" y="548" width="42" height="40"/>
</g>
<circle cx="1593" cy="107" r="10" class="s" stroke-width="2" stroke="#b4b4b4"/><path d="M1590,104l12,12M1590,104v8M1590,104h8" class="s" stroke-width="2.500"/>
<use href="#fold" x="1593" y="154"/><path d="M1586,148l14,14M1600,148l-14,14" stroke="#a0a0a0" stroke-width="3.500"/>
<use href="#fold" x="1593" y="200"/><path d="M1587,204l6-6 6,6v6h-12z" fill="#a8a8a8"/>
<use href="#fold" x="1593" y="246"/><path d="M1586,240l14,14M1600,240l-14,14" stroke="#c6c6c6" stroke-width="4"/>
<use href="#fold" x="1593" y="292"/><rect x="1586" y="287" width="14" height="13" fill="url(#chk3)" fill-opacity=".7"/>
<use href="#fold" x="1593" y="338"/><rect x="1586" y="332" width="14" height="12" class="m" stroke="#bbb" stroke-width="1"/><path d="M1586,336h14M1592,336v8" stroke="#bbb"/>
<use href="#fold" x="1593" y="384"/><path d="M1586,379l4,4M1600,379l-4,4M1586,393l4-4M1600,393l-4-4" stroke="#bbb" stroke-width="2.500"/>
<use href="#fold" x="1593" y="430"/><rect x="1586" y="425" width="14" height="13" fill="none" stroke="#bbb"/><path d="M1586,438l4-5 3,2 3-4 4,7z" fill="#a8a8a8"/>
<use href="#fold" x="1593" y="476"/><rect x="1586" y="471" width="13" height="13" fill="none" stroke="#bbb"/><path d="M1591,479l9-9" stroke="#ccc" stroke-width="2"/>
<use href="#fold" x="1593" y="522"/><path d="M1593,516l6,3v6l-6,3-6-3v-6zM1587,519l6,3 6-3M1593,522v6" fill="none" stroke="#bbb"/>
<use href="#fold" x="1593" y="568"/><circle cx="1593" cy="562" r="2" class="f"/><path d="M1587,565h12M1593,565v5l-3,6M1593,570l3,6" stroke="#c6c6c6" stroke-width="2" fill="none"/>

<!-- right panels -->
<rect x="1619" y="60" width="1" height="958" fill="#2e2e2e"/>
<!-- navigator -->
<rect x="1620" y="108" width="300" height="6" fill="#545454"/>
<use href="#hb" x="1626" y="94"/>
<rect x="1642" y="89" width="93" height="19" fill="#4b4b4b"/><rect x="1736" y="89" width="37" height="19" fill="#4a4a4a"/><rect x="1774" y="89" width="37" height="19" fill="#4a4a4a"/><rect x="1812" y="89" width="37" height="19" fill="#4a4a4a"/>
<rect x="1652" y="98" width="13" height="9" class="m" stroke="#aaa"/><rect x="1656" y="95" width="14" height="12" fill="#777" stroke="#aaa"/>
<text x="1678" y="107" textLength="52" lengthAdjust="spacingAndGlyphs" style="fill:#c4c4c4;font-size:14px">Navigator</text>
<rect x="1747" y="92" width="15" height="15" class="m" stroke="#666"/><path d="M1785,106a8,8 0 0 1 16,0M1785,100h16" class="m" stroke="#666"/><circle cx="1831" cy="103" r="8" class="m" stroke="#666"/><path d="M1831,100v7" stroke="#666" stroke-width="2"/>
<rect x="1620" y="114" width="300" height="148" fill="#2e2e2e"/>
<g clip-path="url(#cn)">
<rect x="1696" y="115" width="147" height="6" fill="#131111"/><rect x="1696" y="115" width="12" height="6" fill="#e8eae7"/><rect x="1708" y="115" width="27" height="6" fill="#505050"/>
<g transform="translate(1691.700,116) scale(.1017,.096)" fill="#e8eae7"><use href="#art"/></g>
</g>
<path d="M1652.500,262V120.500H1871.500V262" fill="none" stroke="#f00" stroke-width="1.600"/>
<rect x="1620" y="262" width="300" height="54" fill="#4b4b4b"/>
<rect x="1624" y="270" width="109" height="16" fill="#3b3b3b" stroke="#707070"/><path d="M1625,286l108-15v15z" fill="#2e2e2e"/>
<rect x="1674" y="266" width="5" height="21" fill="#7a7a7a" stroke="#5a5a5a"/>
<rect x="1624" y="295" width="109" height="17" fill="#3b3b3b" stroke="#707070"/><path d="M1625,296c15,8 30,15 40,15 20,0 30-15 45-15 10,0 18,8 22,15v1h-107z" fill="#2e2e2e"/>
<rect x="1677" y="291" width="4" height="24" fill="#7a7a7a" stroke="#5a5a5a"/>
<text x="1766" y="283" textLength="24" lengthAdjust="spacingAndGlyphs" style="font-size:15px">40.5</text>
<text x="1773" y="308" textLength="17" lengthAdjust="spacingAndGlyphs" style="font-size:15px">0.0</text>
<g class="s" stroke="#bdbdbd" stroke-width="1.300"><circle cx="1802" cy="278" r="9.500"/><path d="M1797,278h10"/><circle cx="1827" cy="278" r="9.500"/><path d="M1822,278h10M1827,273v10"/><circle cx="1852" cy="278" r="9.500"/><path d="M1795,303a8,8 0 1 1 2,7"/><path d="M1833,303a8,8 0 1 0-2,7"/><circle cx="1852" cy="303" r="8.500"/></g>
<rect x="1847" y="273" width="10" height="10" rx="2" class="f"/><path d="M1794,300l6,4-7,3zM1835,300l-6,4 7,3z" class="f"/><circle cx="1852" cy="304" r="2.500" class="f"/>
<path d="M1867.500,268v22M1867.500,295v18" stroke="#6e6e6e"/>
<rect x="1873" y="270" width="13" height="12" class="s" stroke-width="1.300"/><rect x="1879" y="276" width="12" height="11" class="s" fill="#4b4b4b" stroke-width="1.300"/><rect x="1900" y="271" width="13" height="14" class="s" stroke-width="1.300"/><path d="M1903,274l8,8" class="s" stroke-width="1.300"/>
<path d="M1873,297l8,6-8,6zM1885,297v14" class="s" stroke-width="1.300"/><path d="M1892,297l-7,6 7,6z" class="f"/><path d="M1899,304h16" class="s" stroke-width="1.300"/><path d="M1902,295h10l-5,6z" class="f"/><path d="M1902,313h10l-5-6z" class="m" stroke="#bbb" stroke-width="1.300"/>
<!-- layer property -->
<rect x="1620" y="316" width="300" height="5" fill="#333"/>
<use href="#hb" x="1626" y="326"/>
<rect x="1642" y="321" width="117" height="19" fill="#4b4b4b"/><rect x="1760" y="321" width="37" height="19" fill="#4a4a4a"/><rect x="1798" y="321" width="37" height="19" fill="#4a4a4a"/>
<path d="M1652,330l9-5 9,5-9,5zM1652,334l9,5 9-5M1652,338l9,5" class="m" stroke="#aaa" stroke-width="1.200"/><text x="1678" y="339" textLength="76" lengthAdjust="spacingAndGlyphs" style="fill:#c4c4c4;font-size:14px">Layer Property</text>
<path d="M1771,331l8-5 8,5-8,5zM1771,336l8,4" class="m" stroke="#6e6e6e"/><path d="M1810,337a9,9 0 0 1 14-8l-6,10z" fill="#6e6e6e"/>
<rect x="1620" y="340" width="300" height="5" fill="#4f4f4f"/>
<rect x="1620" y="345" width="283" height="203" fill="#414141"/><rect x="1903" y="340" width="17" height="208" fill="#454545"/>
<path d="M1624,357.500h7M1665,357.500h224M1624,404.500h7M1732,404.500h157" stroke="#707070"/>
<text x="1631" y="363" textLength="34" lengthAdjust="spacingAndGlyphs" style="font-size:14px">Effect</text>
<text x="1631" y="410" textLength="100" lengthAdjust="spacingAndGlyphs" style="font-size:14px">Expression color</text>
<rect x="1801" y="367" width="98" height="24" rx="2" fill="#555" stroke="#6a6a6a"/><circle cx="1814" cy="379" r="8" class="s"/><rect x="1834" y="372" width="14" height="14" fill="url(#chk3)"/><rect x="1860" y="373" width="12" height="12" class="m" stroke="#aaa"/><rect x="1856" y="371" width="12" height="12" fill="#8a8a8a" stroke="#aaa"/><path d="M1884,377l5,5 5-5" class="s"/>
<rect x="1639" y="418" width="195" height="24" rx="2" fill="#555" stroke="#6a6a6a"/><circle cx="1711" cy="426" r="5.500" fill="#d9534f"/><circle cx="1706" cy="434" r="5.500" fill="#5fc64a"/><circle cx="1715" cy="434" r="5.500" fill="#4a90d9"/>
<text x="1726" y="435" textLength="32" lengthAdjust="spacingAndGlyphs" style="font-size:14px">Color</text><path d="M1820,428l4,4 4-4" class="s"/>
<!-- layer panel -->
<rect x="1620" y="548" width="300" height="5" fill="#333"/>
<rect x="1620" y="553" width="300" height="18" fill="#3a3a3a"/>
<use href="#hb" x="1626" y="558"/>
<rect x="1642" y="553" width="67" height="19" fill="#4b4b4b"/><rect x="1711" y="553" width="79" height="18" fill="#474747"/><rect x="1791" y="553" width="104" height="18" fill="#474747"/>
<path d="M1652,563l8-5 8,5-8,5zM1652,567l8,5 8-5M1652,571l8,5" class="m" stroke="#bbb" stroke-width="1.200"/>
<text x="1678" y="571" textLength="28" lengthAdjust="spacingAndGlyphs" style="fill:#c4c4c4;font-size:14px">Layer</text>
<path d="M1721,559h16a4,4 0 0 1 0,8h-14M1724,556l-4,3 4,3" class="m" stroke="#707070"/><text x="1748" y="571" textLength="38" lengthAdjust="spacingAndGlyphs" style="fill:#707070;font-size:14px">History</text>
<rect x="1801" y="561" width="16" height="10" fill="#666"/><text x="1828" y="571" textLength="62" lengthAdjust="spacingAndGlyphs" style="fill:#707070;font-size:14px">Auto Action</text>
<rect x="1620" y="571" width="300" height="90" fill="#4b4b4b"/>
<rect x="1621" y="579" width="48" height="24" rx="2" fill="#555" stroke="#6a6a6a"/><rect x="1626" y="582" width="19" height="17" rx="2" fill="none" stroke="#999"/><path d="M1655,588l4,4 4-4" class="s" stroke="#aaa"/>
<rect x="1673" y="579" width="95" height="24" rx="2" fill="#555" stroke="#6a6a6a"/><text x="1691" y="596" textLength="44" lengthAdjust="spacingAndGlyphs" style="font-size:14px">Normal</text><path d="M1754,588l5,5 5-5" class="s"/>
<rect x="1777" y="584" width="94" height="11" fill="url(#chk3)"/><rect x="1871" y="578" width="4" height="24" fill="#7a7a7a"/>
<text x="1882" y="596" textLength="20" lengthAdjust="spacingAndGlyphs" style="font-size:15px">100</text><path d="M1906,587l4-4 4,4M1906,594l4,4 4-4" class="s" stroke-width="1.200"/>
<!-- layer row 2 -->
<rect x="1661" y="610" width="13" height="13" fill="#777"/><rect x="1665" y="606" width="13" height="13" fill="#555" stroke="#bbb" stroke-dasharray="2 1.500"/>
<path d="M1694,606v20M1686,628h16M1691,612l-7-3M1697,612l7-3M1691,617l-7 2M1697,617l7,2" class="s" stroke-width="1.500"/><path d="M1689,628l3-16h4l3,16z" class="f"/>
<path d="M1714,607h8l-2,10-2,8h-2l-2-8zM1722,623l8,4" class="s" stroke-width="1.400"/>
<rect x="1739" y="616" width="13" height="10" rx="1" class="f"/><path d="M1741,616v-3a4,4 0 0 1 9,0v3" class="s"/>
<rect x="1761" y="618" width="9" height="8" rx="1" class="f"/><rect x="1763" y="607" width="5" height="5" fill="#bbb"/><rect x="1770" y="607" width="5" height="5" fill="#777"/><rect x="1770" y="613" width="5" height="5" fill="#bbb"/>
<rect x="1782" y="605" width="45" height="24" rx="2" fill="#474747"/><rect x="1828" y="605" width="45" height="24" rx="2" fill="#474747"/>
<circle cx="1796" cy="615" r="6" fill="none" stroke="#707070" stroke-width="3"/><path d="M1800,619l7,7M1807,619l-7,7" stroke="#707070" stroke-width="1.500"/><path d="M1814,613l4,4 4-4" class="dk"/>
<path d="M1836,607h12l-9,9v7zM1847,619l7,7M1854,619l-7,7" fill="#666" stroke="#707070"/><path d="M1859,613l4,4 4-4" class="dk"/>
<rect x="1874" y="604" width="44" height="25" rx="3" fill="#555" stroke="#707070"/><rect x="1885" y="613" width="11" height="11" fill="#fff"/><rect x="1878" y="608" width="12" height="11" fill="#3b82e6" stroke="#ddd"/><path d="M1904,614l5,5 5-5" class="s"/>
<!-- layer row 3 -->
<rect x="1623" y="636" width="17" height="16" rx="2" class="s" stroke="#bbb" stroke-width="1.300"/><path d="M1623,641h17M1623,647h17" stroke="#bbb"/><rect x="1625" y="638" width="3" height="2" class="f"/>
<path d="M1723,654V638h13v14" class="s" stroke-width="1.300"/><path d="M1725,654h8" class="s"/><circle cx="1738" cy="652" r="4.500" class="f"/><path d="M1738,650v4M1736,652h4" stroke="#4b4b4b"/>
<rect x="1748" y="637" width="15" height="16" rx="2" class="s" stroke-width="1.300"/><path d="M1755,640l4,2v5l-4,2-4-2v-5z" class="s" stroke-width="1"/><circle cx="1763" cy="652" r="4.500" class="f"/>
<path d="M1771,655V640h8l2,2h7v9" fill="#bbb"/><circle cx="1788" cy="652" r="4.500" class="f"/>
<g stroke="#707070" fill="none" stroke-width="1.500"><rect x="1804" y="635" width="10" height="10" fill="#666"/><rect x="1797" y="642" width="12" height="12"/><rect x="1829" y="635" width="10" height="10"/><rect x="1822" y="642" width="12" height="12" fill="#666"/><rect x="1873" y="640" width="16" height="14" rx="1"/><circle cx="1886" cy="648" r="4" fill="#666"/><rect x="1900" y="640" width="12" height="15" rx="1"/><path d="M1898,638h16M1904,643v9M1908,643v9"/></g>
<rect x="1848" y="636" width="18" height="18" rx="4" fill="#d0d0d0"/><circle cx="1857" cy="645" r="5" fill="#3a3a3a"/>
<!-- layer list -->
<rect x="1620" y="660" width="300" height="358" fill="#3e3e3e"/>
<rect x="1620" y="661" width="24" height="42" fill="#3e3e3e"/>
<path d="M1623,680c4-5 12-5 16,0-4,4-12,4-16,0z" fill="none" stroke="#c6c6c6" stroke-width="1.500"/><circle cx="1632" cy="679" r="3.500" class="f"/>
<path d="M1644.500,661v42M1667.500,661v42" stroke="#2a2a2a"/>
<path d="M1647,686l2-4 10-10 3,3-11,10zM1647,689h16" class="s" stroke-width="1.500"/>
<rect x="1668" y="661" width="235" height="42" fill="#5e6a80"/>
<rect x="1620" y="703" width="283" height="1.500" fill="#222"/>
<rect x="1903" y="660" width="17" height="358" fill="#454545"/>
<rect x="1674.500" y="662.500" width="39" height="39" fill="#131111" stroke="#e6e6e6" stroke-width="1.200"/>
<g transform="translate(1675,663.150) scale(.0249,.0242)" fill="#e8eae7"><use href="#art"/></g>
<text x="1721" y="678" textLength="82" lengthAdjust="spacingAndGlyphs" style="font-size:14px;fill:#e0e0e0">100 % Normal</text>
<text x="1721" y="696" clip-path="url(#cl)" textLength="190" lengthAdjust="spacingAndGlyphs" style="font-size:13px;fill:#b8bcc4">low_DefaultMaterial_AlbedoTransparency</text>
<!-- cursor -->
<path d="M1827,903v16l4-4 3,7 2-1-3-7h6z" fill="#fff" stroke="#000" stroke-width=".8"/>
</svg>
</body></html>
